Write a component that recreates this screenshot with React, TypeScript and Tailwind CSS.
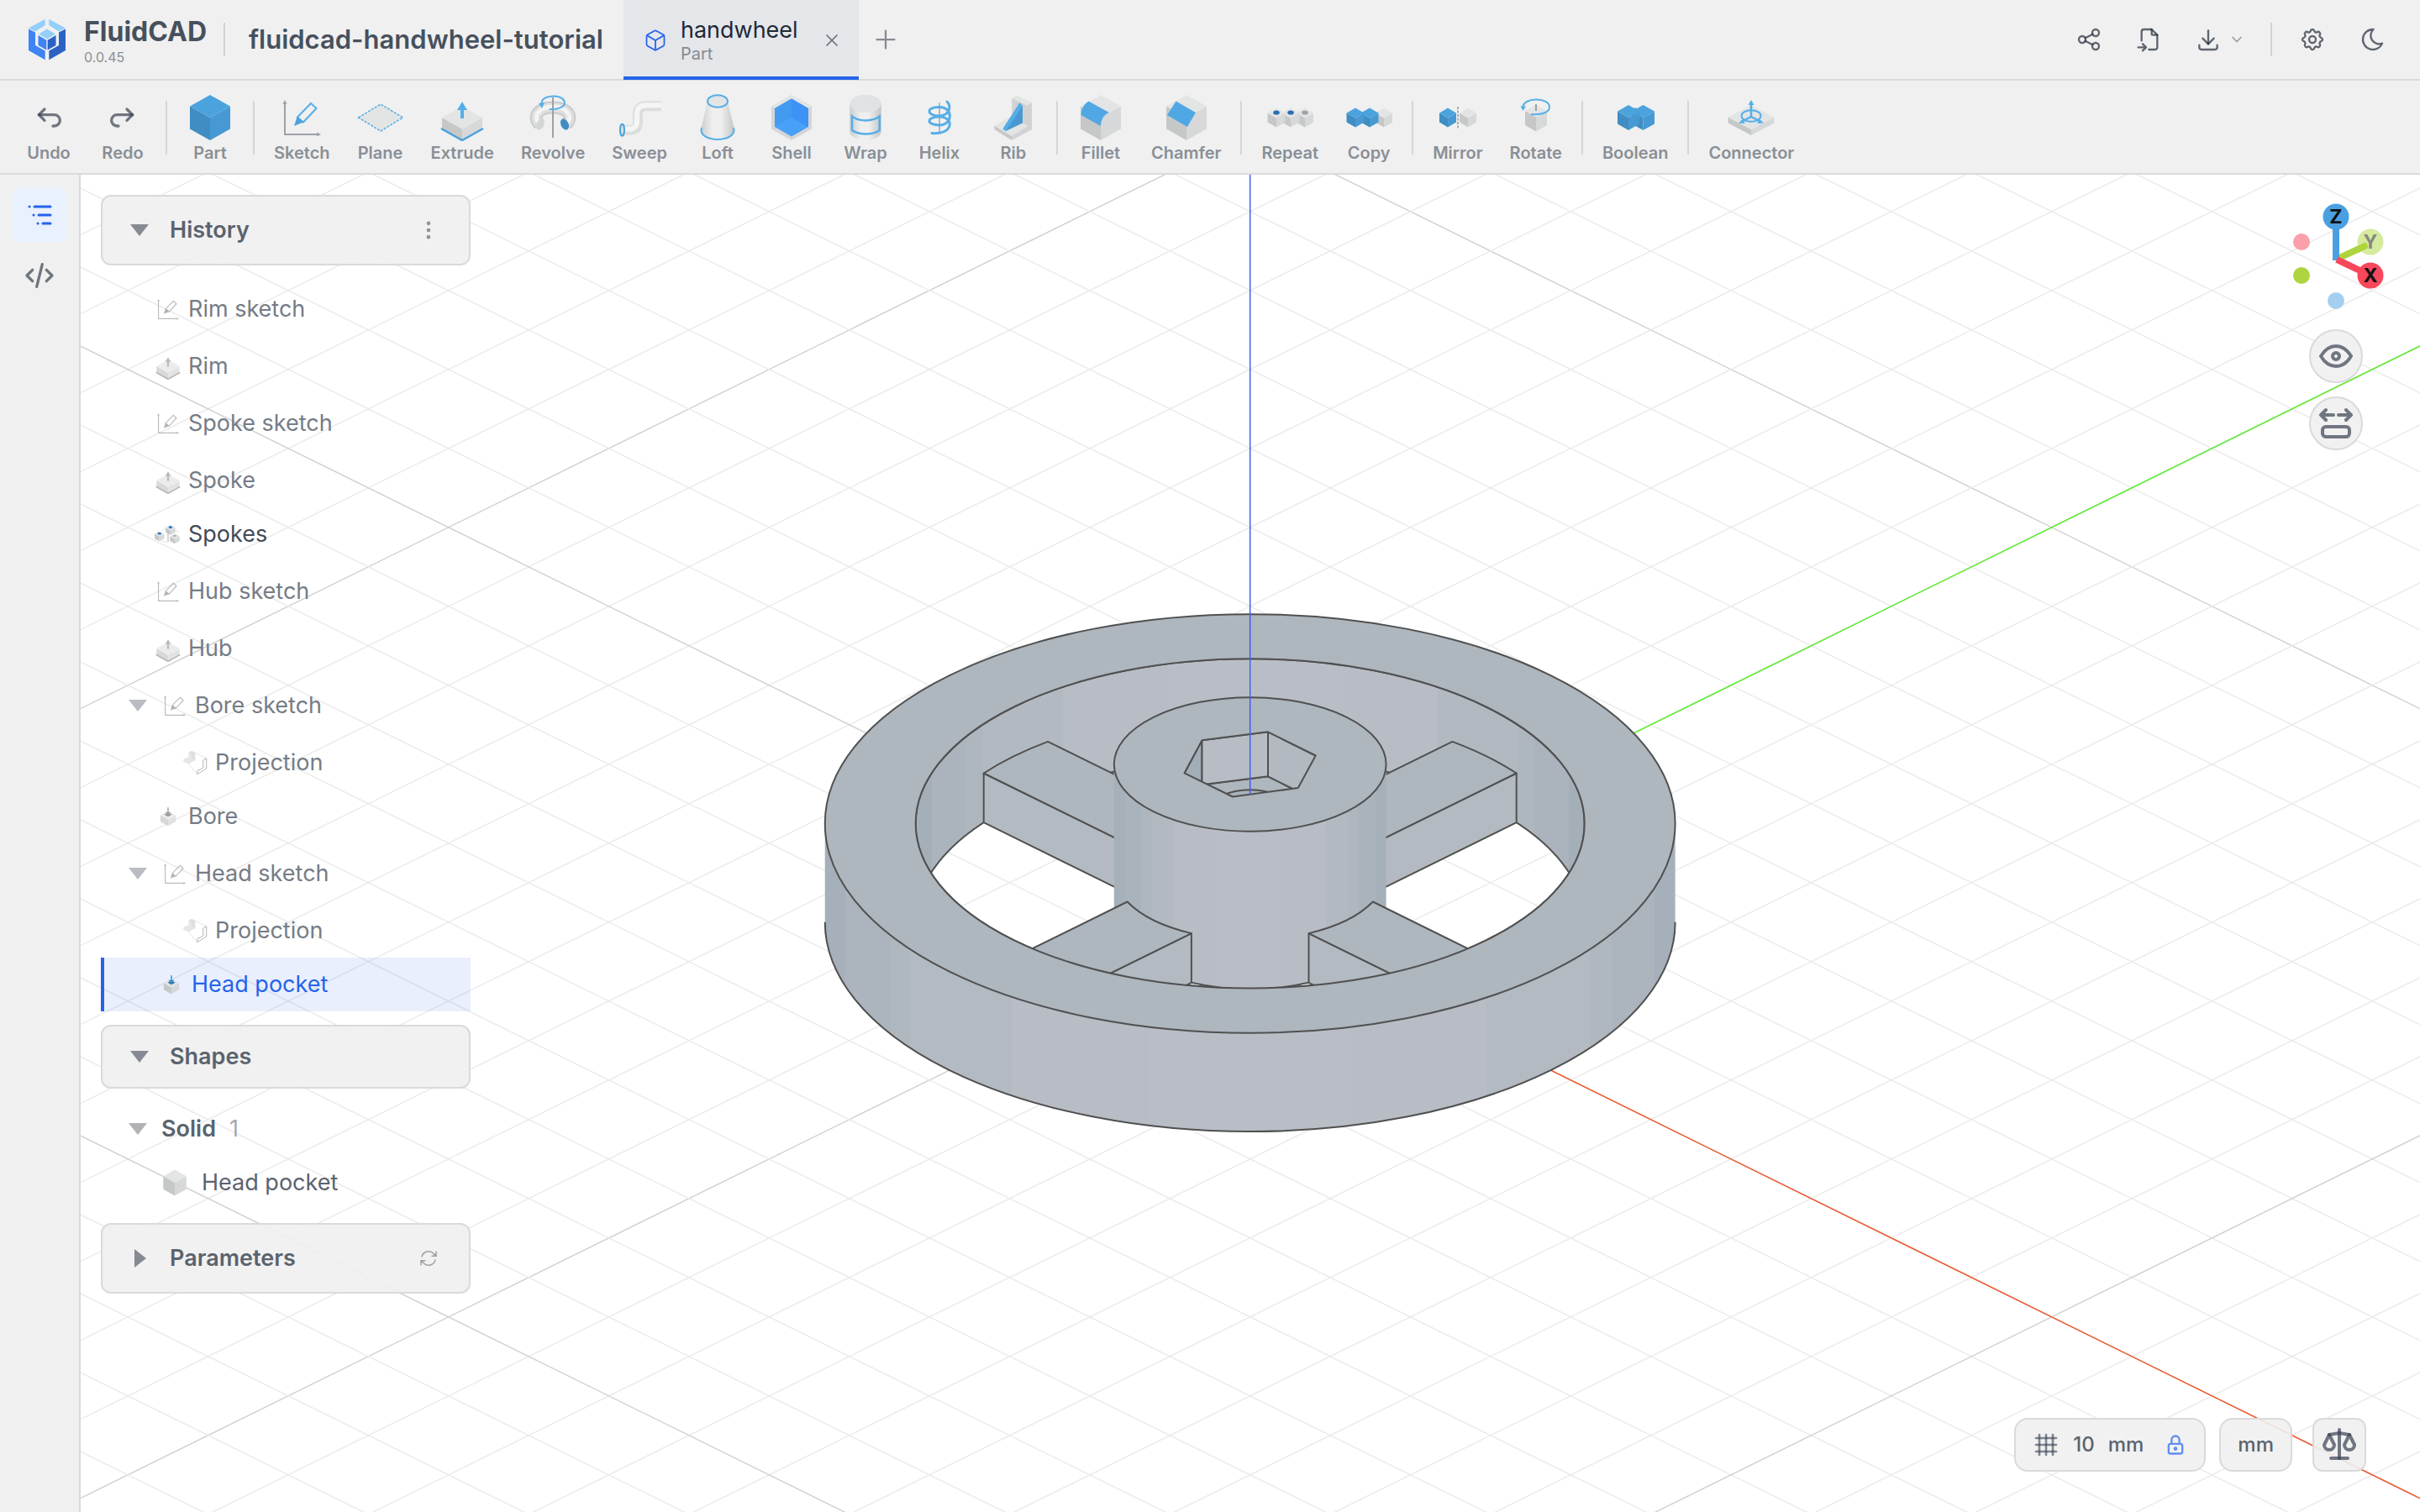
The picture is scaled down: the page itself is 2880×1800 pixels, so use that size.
import { useState, type ReactNode } from 'react';
import { HiOutlineArrowPath } from 'react-icons/hi2';
import {
  TbArrowBackUp,
  TbArrowForwardUp,
  TbChevronDown,
  TbCode,
  TbCube,
  TbDotsVertical,
  TbDownload,
  TbEye,
  TbFileImport,
  TbGrid4X4,
  TbLock,
  TbMoon,
  TbPlus,
  TbScale,
  TbSettings,
  TbShare,
  TbX,
} from 'react-icons/tb';

const BLUE = { top: '#4ba3dd', left: '#3f8dc2', right: '#4799d3' };
const GRAY = { top: '#e3e5e5', left: '#c6c8c8', right: '#d6d8d9' };
const LINE = '#56aee8';

interface BoxProps {
  x?: number;
  y?: number;
  w?: number;
  d?: number;
  h?: number;
  tone?: typeof BLUE;
}

// isometric box, (x, y) is the centre of its top face
function Box({ x = 28, y = 14.5, w = 24, d = 13.5, h = 27, tone = GRAY }: BoxProps) {
  return (
    <g>
      <path d={`M${x - w} ${y}L${x} ${y + d}V${y + d + h}L${x - w} ${y + h}Z`} fill={tone.left} />
      <path d={`M${x + w} ${y}L${x} ${y + d}V${y + d + h}L${x + w} ${y + h}Z`} fill={tone.right} />
      <path d={`M${x - w} ${y}L${x} ${y - d}L${x + w} ${y}L${x} ${y + d}Z`} fill={tone.top} />
    </g>
  );
}

const ICONS: Record<string, ReactNode> = {
  part: <Box tone={BLUE} />,
  sketch: (
    <g fill="none">
      <path d="M8 9V48H48" stroke="#9ca1a8" strokeWidth="2" />
      <path d="M5.500 12L8 7L10.500 12ZM46 45.500L51 48L46 50.500Z" fill="#9ca1a8" />
      <path d="M39 11L45.500 17L30 33.500L23 27.500Z" stroke={LINE} strokeWidth="2" />
      <path d="M22.500 27L30 33.500L19 38Z" fill="#4ba3dd" />
    </g>
  ),
  plane: (
    <path d="M1.500 28L28 12L54.500 28L28 44Z" fill="#e3e5e5" stroke={LINE} strokeWidth="1.500" strokeDasharray="3 1.500" />
  ),
  extrude: (
    <g>
      <Box y={28} h={13} />
      <path d="M3 41L28 55L53 41" fill="none" stroke="#4b9fdc" strokeWidth="2.500" />
      <path d="M28 29V17" stroke={LINE} strokeWidth="4" />
      <path d="M22 19L28 9L34 19Z" fill={LINE} />
    </g>
  ),
  revolve: (
    <g fill="none">
      <path d="M12 36C3 27 10 16 28 16S53 27 44 36" stroke="#c9cbcc" strokeWidth="15" />
      <path d="M12 36C3 27 10 16 28 16S53 27 44 36" stroke="#dddfdf" strokeWidth="11" />
      <path d="M11 34C4 27 11 15 28 15S52 27 45 34" stroke="#f4f4f4" strokeWidth="5" />
      <ellipse cx="13" cy="36" rx="4.500" ry="7" fill="#d3d5d6" transform="rotate(25 13 36)" />
      <ellipse cx="42" cy="36" rx="4.500" ry="7" fill="#3f8dc2" transform="rotate(-25 42 36)" />
      <path d="M28 4V52" stroke="#9ca1a8" strokeWidth="2" />
      <path d="M15 14C12 5 22 2.500 29 2.500C37 2.500 42 6 42 10.500C42 15 35 18.500 24 18" stroke={LINE} strokeWidth="2" />
      <path d="M11 11L18 10L15 17Z" fill={LINE} />
    </g>
  ),
  sweep: (
    <g fill="none">
      <path d="M8 42.700H17C24 42.700 26 39 26 33V25C26 17 29 14.300 36 14.300H54" stroke="#dcdede" strokeWidth="12" />
      <path d="M8 41.700H16C22 41.700 25 38 25 32V24C25 16 29 13.300 36 13.300H54" stroke="#f5f5f5" strokeWidth="6" />
      <ellipse cx="7.500" cy="42.700" rx="2.500" ry="7" fill="#dfe1e1" stroke="#4ba3dd" strokeWidth="2" />
    </g>
  ),
  loft: (
    <g>
      <path d="M16 9L8 42C8 50 17 54 28 54S48 50 48 42L40 9Z" fill="url(#barrel)" />
      <path d="M9 40C6 49 17 54 28 54S50 49 47 40" fill="none" stroke={LINE} strokeWidth="2" />
      <ellipse cx="28" cy="8.500" rx="12" ry="7.300" fill="#e3e5e5" stroke={LINE} strokeWidth="2" />
    </g>
  ),
  shell: (
    <g>
      <path d="M28 1L52 14.500V41.500L28 55L4 41.500V14.500Z" fill="#d3d5d6" />
      <path d="M28 1L52 14.500L48 17L28 5.500L8 17L4 14.500Z" fill="#e3e5e5" />
      <path d="M28 5.500L48 17V39L28 50.500L8 39V17Z" fill="#48a0f8" />
      <path d="M28 5.500V28L8 39V17Z" fill="#439bf0" />
      <path d="M28 5.500L48 17V39L28 28Z" fill="#3c93f5" />
    </g>
  ),
  wrap: (
    <g>
      <path d="M9.300 11V44C9.300 50 17 55 28 55S46.700 50 46.700 44V11Z" fill="url(#barrel)" />
      <ellipse cx="28" cy="11.300" rx="18.700" ry="10.500" fill="#e0e3e3" />
      <path d="M12 26.500C20 33 36 33 44.700 26.500V43C37 49 20 49 12 43Z" fill="none" stroke={LINE} strokeWidth="2.500" />
    </g>
  ),
  helix: (
    <g fill="none" stroke={LINE} strokeWidth="3" strokeLinecap="round">
      <path d="M28 11V45" stroke="#b3b6ba" strokeWidth="2" />
      <path d="M37 9C42 14 41 25 28 26C12 26 12 15 28 15.500C45 16 44 37 28 37C12 37 12 27 28 27C46 27 45 49 19 46.500" />
    </g>
  ),
  rib: (
    <g>
      <path d="M26.300 5L32 1.500L50 10V42L26 55L5.500 42V38L26.300 26Z" fill="#e3e5e5" />
      <path d="M26.300 5L45 14V38L26.300 27Z" fill="#d0d2d3" />
      <path d="M50 10V42L26 55V50L45 38.500V13Z" fill="#d0d2d3" />
      <path d="M5.500 38L26 50V55L5.500 42Z" fill="#c6c8c8" />
      <path d="M35.500 10.500L39 14V34.500L19 44L15.500 41.500Z" fill="#4799d3" />
      <path d="M35.500 10.500L15.500 41.500L19 44L39 14Z" fill="#56aee8" />
    </g>
  ),
  fillet: (
    <g>
      <Box />
      <path d="M13.500 8.500L38 22C31 25 28 31 28 38L4.500 25C5 17 8 12 13.500 8.500Z" fill="#4fa8e3" />
    </g>
  ),
  chamfer: (
    <g>
      <Box />
      <path d="M15.500 8.500L39 22L29 39L5 25Z" fill="#4fa8e3" />
    </g>
  ),
  repeat: (
    <g>
      {[46, 29, 12].map((x) => (
        <g key={x}>
          <Box x={x} y={22.500} w={10.500} d={6} h={11} />
          <ellipse cx={x} cy="22" rx="3.800" ry="2.600" fill={x === 46 ? '#a0a3a6' : '#2a6db3'} />
        </g>
      ))}
    </g>
  ),
  copy: (
    <g>
      <Box x={46} y={22.500} w={10.500} d={6} h={11} />
      <Box x={29} y={22.500} w={10.500} d={6} h={11} tone={BLUE} />
      <Box x={12} y={22.500} w={10.500} d={6} h={11} tone={BLUE} />
    </g>
  ),
  mirror: (
    <g>
      <Box x={16} y={22.500} w={10} d={6} h={11} tone={BLUE} />
      <Box x={40} y={22.500} w={10} d={6} h={11} />
      <path d="M28 15V41" stroke="#aaadb0" strokeWidth="2" strokeDasharray="3 1.500" />
    </g>
  ),
  rotate: (
    <g fill="none">
      <Box y={20} w={13} d={7.5} h={17} />
      <path d="M28 12V20" stroke="#9ca1a8" strokeWidth="2" />
      <path d="M12.500 16C12 10 20 6.500 28 6.500C37 6.500 44 10 44 15.500C44 22 34 25 22 24" stroke={LINE} strokeWidth="2" />
      <path d="M9.500 14.500L16 14.500L12.500 20Z" fill={LINE} />
    </g>
  ),
  boolean: (
    <g>
      <Box x={37.5} y={20.5} w={13.5} d={7.5} h={15} tone={BLUE} />
      <Box x={20} y={20.5} w={13} d={7.5} h={15} tone={BLUE} />
      <path d="M28.500 16L34 20.500L28.500 24.500L22 20.500Z" fill="#4ba3dd" />
    </g>
  ),
  connector: (
    <g fill="none" stroke={LINE} strokeWidth="2.500">
      <g stroke="none">
        <Box y={27.500} w={27.500} d={14.500} h={7} />
      </g>
      <ellipse cx="28" cy="26" rx="11.500" ry="6.800" strokeWidth="2" />
      <path d="M28 10V27L16 33M28 27L40 33" />
      <path d="M24.500 13L28 7L31.500 13ZM18.500 29.500L13 34.500L20.500 35ZM37.500 29.500L43 34.500L35.500 35Z" fill={LINE} stroke="none" />
    </g>
  ),
  cube: <Box />,
  pocket: (
    <g>
      <Box y={25} w={16} d={8.5} h={14} />
      <path d="M20 24L28 20L36 24L28 28.500Z" fill="#2a7ab0" />
      <path d="M28 9V20" stroke={LINE} strokeWidth="3.500" />
      <path d="M22 19H34L28 26Z" fill="#3f8dc2" />
    </g>
  ),
  spokes: (
    <g>
      <path d="M16 20L26 14M41 18L50 24M12 40L26 46" stroke="#b3b6ba" strokeWidth="1.500" strokeDasharray="2 2" />
      <path d="M28 20V44" stroke="#b3b6ba" strokeWidth="2" />
      <Box x={33} y={14} w={10} d={5.5} h={10} />
      <Box x={10} y={27} w={10} d={5.5} h={10} />
      <Box x={42} y={32} w={10} d={5.5} h={10} />
      <ellipse cx="33" cy="13.500" rx="4" ry="2.500" fill="#2f78c4" />
      <ellipse cx="10" cy="26.500" rx="4" ry="2.500" fill="#2f78c4" />
      <ellipse cx="42" cy="31.500" rx="4" ry="2" fill="#b3b6ba" />
    </g>
  ),
  projection: (
    <g fill="none">
      <path d="M14.500 7L21 3.500L28.500 7V23L15 31L4 26V20L14.500 16Z" fill="#dcdede" />
      <path d="M14.500 7L21 10.500V20L28.500 23V7L21 3.500Z" fill="#cfd1d1" />
      <path d="M28.500 7L52 19M15 31L33 52" stroke="#b6b9bc" />
      <path d="M52 19V40L33 52V45L45 38.500V23Z" stroke="#7d8187" strokeWidth="1.500" />
    </g>
  ),
};

function PartIcon({ name, className }: { name: string; className: string }) {
  return (
    <svg viewBox="0 0 56 56" className={className} aria-hidden="true">
      {ICONS[name]}
    </svg>
  );
}

function Logo() {
  return (
    <svg viewBox="0 0 48 50" className="h-[50px] w-12" aria-hidden="true">
      <path d="M21.700 .7V8L10 15.500L2 11.500Z" fill="#93cffd" />
      <path d="M26.300 .7V8L38 15.500L46 11.500Z" fill="#93cffd" />
      <path d="M2 12.500L10 16.500V32L21.700 38.500V49.300L2 38Z" fill="#3f83f6" />
      <path d="M46 12.500L38 16.500V32L26.300 38.500V49.300L46 38Z" fill="#2a63c4" />
      <path d="M24 12.500L34 18.500L24 24.500L14 18.500Z" fill="#93cffd" />
      <path d="M13.500 20L23.300 25.700V37.500L13.500 32Z" fill="#3f83f6" />
      <path d="M34.500 20L24.700 25.700V37.500L34.500 32Z" fill="#2a63c4" />
    </svg>
  );
}

/* ---------- viewport ---------- */

const MM = 9.54;
const SLOPE = 0.4927;
const UP = 11.74;

// world millimetres -> drawing units, origin in the middle of the view
const project = (x: number, y: number, z: number) =>
  `${((x + y) * MM).toFixed(1)} ${((x - y) * MM * SLOPE - z * UP).toFixed(1)}`;

const poly = (...pts: number[][]) => `M${pts.map(([x, y, z]) => project(x, y, z)).join('L')}Z`;

const ring = (r: number, z: number) => {
  const rx = r * MM * Math.SQRT2;
  const ry = rx * SLOPE;
  const cy = -z * UP;
  return `M${-rx} ${cy}A${rx} ${ry} 0 1 1 ${rx} ${cy}A${rx} ${ry} 0 1 1 ${-rx} ${cy}Z`;
};

// front half of a circle
const frontArc = (r: number, z: number) => {
  const rx = r * MM * Math.SQRT2;
  return `M${-rx} ${-z * UP}A${rx} ${rx * SLOPE} 0 0 0 ${rx} ${-z * UP}`;
};

// front half of a cylinder's wall
const wall = (r: number, z0: number, z1: number) => {
  const rx = r * MM * Math.SQRT2;
  const ry = rx * SLOPE;
  return `M${-rx} ${-z1 * UP}V${-z0 * UP}A${rx} ${ry} 0 0 0 ${rx} ${-z0 * UP}V${-z1 * UP}A${rx} ${ry} 0 0 1 ${-rx} ${-z1 * UP}Z`;
};

const TOP = '#aeb6be';
const SIDE = '#b3bac1';
const EDGE = '#505050';

const R_OUT = 37.5;
const R_IN = 29.5;
const R_HUB = 12;
const IN_X = Math.sqrt(R_IN ** 2 - 16);
const HUB_X = Math.sqrt(R_HUB ** 2 - 16);

const HEX = [
  [-57.2, -216.5],
  [21.3, -226.5],
  [78, -198.3],
  [57.1, -159.7],
  [-20.7, -149.3],
  [-78.1, -177.5],
];
const HEX_DEPTH = 53;
const hexPath = (dy: number) => `M${HEX.map(([x, y]) => `${x} ${y + dy}`).join('L')}Z`;

function hexFace(i: number) {
  const [ax, ay] = HEX[i];
  const [bx, by] = HEX[(i + 1) % 6];
  return `M${ax} ${ay}L${bx} ${by}V${by + HEX_DEPTH}L${ax} ${ay + HEX_DEPTH}Z`;
}

function Bands({ id, stops }: { id: string; stops: [number, string][] }) {
  return (
    <linearGradient id={id}>
      {stops.map(([at, color], i) => [
        <stop key={`${i}a`} offset={i === 0 ? 0 : stops[i - 1][0]} stopColor={color} />,
        <stop key={`${i}b`} offset={at} stopColor={color} />,
      ])}
    </linearGradient>
  );
}

function Grid() {
  const lines: ReactNode[] = [];
  for (let k = -34; k <= 34; k++) {
    const y = k * 94;
    const stroke = k % 10 === 0 ? '#d2d2d2' : '#ebebeb';
    lines.push(<path key={k} d={`M-2400 ${y - 2400 * SLOPE}L2400 ${y + 2400 * SLOPE}M-2400 ${y + 2400 * SLOPE}L2400 ${y - 2400 * SLOPE}`} stroke={stroke} />);
  }
  return <g strokeWidth="1.500">{lines}</g>;
}

function Handwheel() {
  const s = 4;
  return (
    <g strokeLinejoin="round">
      <path d={wall(R_OUT, 0, 10)} fill="url(#outer)" />
      <path d={frontArc(R_OUT, 0)} fill="none" stroke={EDGE} strokeWidth="2" />
      <path d={`${ring(R_OUT, 10)}${ring(R_IN, 10)}`} fillRule="evenodd" fill={TOP} />
      <g clipPath="url(#opening)" stroke={EDGE} strokeWidth="2">
        <path d={`${ring(R_IN, 10)}${ring(R_IN, 0)}`} fillRule="evenodd" fill="url(#inner)" />

        {/* rear spokes */}
        <path d={poly([-IN_X, -s, 5], [-IN_X, -s, 0], [-HUB_X, -s, 0], [-HUB_X, -s, 5])} fill={SIDE} />
        <path d={`M${project(-IN_X, s, 5)}A398 196 0 0 0 ${project(-IN_X, -s, 5)}L${project(-HUB_X, -s, 5)}L${project(-HUB_X, s, 5)}Z`} fill={TOP} />
        <path d={poly([s, IN_X, 5], [s, IN_X, 0], [s, HUB_X, 0], [s, HUB_X, 5])} fill={SIDE} />
        <path d={`M${project(-s, IN_X, 5)}A398 196 0 0 1 ${project(s, IN_X, 5)}L${project(s, HUB_X, 5)}L${project(-s, HUB_X, 5)}Z`} fill={TOP} />

        {/* hub */}
        <path d={wall(R_HUB, 0, 16)} fill="url(#hub)" stroke="none" />
        <path d={`M${project(4, -HUB_X, 0)}A162 79.800 0 0 0 ${project(HUB_X, -4, 0)}`} fill="none" />
        <path d={ring(R_HUB, 16)} fill={TOP} />
        <g clipPath="url(#socket)">
          <path d={hexPath(HEX_DEPTH)} fill={TOP} />
          <path d={ring(3.4, 11.5)} fill="#a9b1b9" />
          <path d={hexFace(5)} fill="#a3adb7" />
          <path d={hexFace(0)} fill="#b8bcc5" />
          <path d={hexFace(1)} fill="#b3b9c0" />
        </g>
        <path d={hexPath(0)} fill="none" />

        {/* front spokes */}
        <path d={poly([HUB_X, -s, 5], [HUB_X, -s, 0], [IN_X, -s, 0], [IN_X, -s, 5])} fill={SIDE} />
        <path d={`M${project(HUB_X, -s, 5)}A162 79.800 0 0 0 ${project(HUB_X, s, 5)}L${project(IN_X, s, 5)}L${project(IN_X, -s, 5)}Z`} fill={TOP} />
        <path d={poly([s, -HUB_X, 5], [s, -HUB_X, 0], [s, -IN_X, 0], [s, -IN_X, 5])} fill={SIDE} />
        <path d={`M${project(-s, -HUB_X, 5)}A162 79.800 0 0 0 ${project(s, -HUB_X, 5)}L${project(s, -IN_X, 5)}L${project(-s, -IN_X, 5)}Z`} fill={TOP} />
      </g>
      <path d={`${ring(R_OUT, 10)}${ring(R_IN, 10)}`} fill="none" stroke={EDGE} strokeWidth="2" />
    </g>
  );
}

function Viewport() {
  return (
    <svg
      viewBox="-1391.700 -889.800 2784 1592"
      preserveAspectRatio="xMidYMid slice"
      className="absolute inset-0 h-full w-full"
      role="img"
      aria-label="handwheel model"
    >
      <defs>
        <clipPath id="opening">
          <path d={ring(R_IN, 10)} />
        </clipPath>
        <clipPath id="socket">
          <path d={hexPath(0)} />
        </clipPath>
        <linearGradient id="barrel">
          <stop offset="0" stopColor="#cbcdce" />
          <stop offset=".35" stopColor="#efefef" />
          <stop offset=".6" stopColor="#efefef" />
          <stop offset="1" stopColor="#c3c5c6" />
        </linearGradient>
        <Bands
          id="outer"
          stops={[
            [0.024, '#a6b0ba'],
            [0.077, '#acb4bd'],
            [0.1, '#b0b8bf'],
            [0.22, '#b3bac1'],
            [0.38, '#b8bdc5'],
            [0.616, '#b9bec6'],
            [0.778, '#b8bdc5'],
            [0.9, '#b3bac1'],
            [0.925, '#b0b8bf'],
            [0.976, '#acb4bd'],
            [1, '#a6b0ba'],
          ]}
        />
        <Bands
          id="inner"
          stops={[
            [0.024, '#a5afb8'],
            [0.075, '#abb4bc'],
            [0.1, '#aeb6be'],
            [0.22, '#b3b9c0'],
            [0.38, '#b8bdc5'],
            [0.64, '#b9bec6'],
            [0.779, '#b8bdc5'],
            [0.9, '#b3b9c0'],
            [0.925, '#aeb6be'],
            [0.976, '#abb4bc'],
            [1, '#a5afb8'],
          ]}
        />
        <Bands
          id="hub"
          stops={[
            [0.04, '#a5b0b9'],
            [0.1, '#a9b3bc'],
            [0.14, '#aeb6be'],
            [0.22, '#b3b9c0'],
            [0.38, '#b8bdc5'],
            [0.62, '#b9bec6'],
            [0.78, '#b8bdc5'],
            [0.86, '#b3b9c0'],
            [0.9, '#aeb6be'],
            [0.96, '#a9b3bc'],
            [1, '#a5b0b9'],
          ]}
        />
      </defs>
      <Grid />
      <path d={`M0 0L2400 ${2400 * SLOPE}`} stroke="#f0562a" strokeWidth="1.500" />
      <path d={`M0 0L2400 ${-2400 * SLOPE}`} stroke="#5cee2e" strokeWidth="1.500" />
      <Handwheel />
      <path d="M0 -1400V-152" stroke="#4060f0" strokeWidth="1.500" />
    </svg>
  );
}

function AxisGizmo() {
  return (
    <svg viewBox="0 0 128 136" className="h-34 w-32" role="img" aria-label="View orientation">
      <g fontFamily="Inter, sans-serif" fontWeight="700" fontSize="23" textAnchor="middle">
        <circle cx="23" cy="48" r="10" fill="#fb9fab" />
        <circle cx="64" cy="118" r="10" fill="#a4cff0" />
        <path d="M66 68L98 53" stroke="#aed53f" strokeWidth="8" />
        <circle cx="105" cy="48" r="15.500" fill="#d6eaa0" />
        <path d="M90 57L98 53" stroke="#aed53f" strokeWidth="8" strokeLinecap="round" />
        <text x="105" y="56" fill="#86897f">Y</text>
        <path d="M64 70V18" stroke="#4a9fe2" strokeWidth="8" />
        <circle cx="64" cy="18" r="15.500" fill="#4a9fe2" />
        <text x="64" y="26" fill="#111">Z</text>
        <path d="M65 69L105 88" stroke="#f8465a" strokeWidth="8" />
        <circle cx="105" cy="88" r="15.500" fill="#f8465a" />
        <text x="105" y="96" fill="#111">X</text>
        <circle cx="23" cy="88" r="10" fill="#aed53f" />
      </g>
    </svg>
  );
}

/* ---------- chrome ---------- */

const TOOL_GROUPS: { label: string; icon: string }[][] = [
  [{ label: 'Part', icon: 'part' }],
  [
    { label: 'Sketch', icon: 'sketch' },
    { label: 'Plane', icon: 'plane' },
    { label: 'Extrude', icon: 'extrude' },
    { label: 'Revolve', icon: 'revolve' },
    { label: 'Sweep', icon: 'sweep' },
    { label: 'Loft', icon: 'loft' },
    { label: 'Shell', icon: 'shell' },
    { label: 'Wrap', icon: 'wrap' },
    { label: 'Helix', icon: 'helix' },
    { label: 'Rib', icon: 'rib' },
  ],
  [
    { label: 'Fillet', icon: 'fillet' },
    { label: 'Chamfer', icon: 'chamfer' },
  ],
  [
    { label: 'Repeat', icon: 'repeat' },
    { label: 'Copy', icon: 'copy' },
  ],
  [
    { label: 'Mirror', icon: 'mirror' },
    { label: 'Rotate', icon: 'rotate' },
  ],
  [{ label: 'Boolean', icon: 'boolean' }],
  [{ label: 'Connector', icon: 'connector' }],
];

function ToolButton({ label, children }: { label: string; children: ReactNode }) {
  return (
    <button className="flex min-w-20 flex-col items-center gap-[2px] px-3 text-xl leading-6 font-semibold text-[#8a8f97]">
      <span className="flex h-14 items-center">{children}</span>
      {label}
    </button>
  );
}

function Separator() {
  return <span className="mx-[3px] mt-2 h-16 w-[2px] bg-[#d6d6d6]" />;
}

function Toolbar() {
  return (
    <div className="flex h-28 shrink-0 items-start gap-2 border-b-2 border-[#dadada] bg-[#f0f0f0] px-[18px] pt-4">
      <ToolButton label="Undo">
        <TbArrowBackUp className="size-10 text-[#374151]/70" />
      </ToolButton>
      <ToolButton label="Redo">
        <TbArrowForwardUp className="size-10 text-[#374151]/70" />
      </ToolButton>
      {TOOL_GROUPS.map((group) => (
        <div key={group[0].label} className="flex gap-2">
          <Separator />
          {group.map(({ label, icon }) => (
            <ToolButton key={label} label={label}>
              <PartIcon name={icon} className="size-14" />
            </ToolButton>
          ))}
        </div>
      ))}
    </div>
  );
}

function Header() {
  return (
    <header className="flex h-24 shrink-0 items-center justify-between border-b-2 border-[#dadada] bg-[#f0f0f0] pr-6 pl-8">
      <div className="flex h-full items-center">
        <Logo />
        <div className="ml-5 flex flex-col pt-1.5">
          <span className="text-[32px] leading-8 font-bold text-[#47505d]">FluidCAD</span>
          <span className="mt-1 text-base leading-5 text-[#8a8f97]">0.0.45</span>
        </div>
        <span className="mr-7 ml-5 h-10 w-[2px] bg-[#d2d2d2]" />
        <h1 className="text-[31px] leading-10 font-semibold text-[#47505d]">fluidcad-handwheel-tutorial</h1>
        <div className="ml-6 flex h-24 w-[280px] items-center border-b-4 border-[#2563eb] bg-[#e4e6ea] pt-1.5 pr-4 pl-6">
          <TbCube className="size-7 text-[#2563eb]" strokeWidth={1.5} />
          <button className="ml-4 flex flex-1 flex-col text-left">
            <span className="text-[27px] leading-8 text-[#1f2937]">handwheel</span>
            <span className="text-xl leading-6 text-[#858a92]">Part</span>
          </button>
          <button aria-label="Close tab" className="flex size-8 items-center justify-center text-[#6b7280]">
            <TbX className="size-6" strokeWidth={1.75} />
          </button>
        </div>
        <button aria-label="New tab" className="flex size-16 items-center justify-center text-[#858a92]">
          <TbPlus className="size-9" strokeWidth={1.5} />
        </button>
      </div>
      <div className="flex items-center gap-2 text-[#1f2937]/70">
        <button aria-label="Share" className="flex size-16 items-center justify-center">
          <TbShare className="size-8" strokeWidth={1.75} />
        </button>
        <button aria-label="Import" className="flex size-16 items-center justify-center">
          <TbFileImport className="size-8" strokeWidth={1.75} />
        </button>
        <button aria-label="Export" className="flex h-16 items-center gap-2 px-3.5">
          <TbDownload className="size-8" strokeWidth={1.75} />
          <TbChevronDown className="size-5 opacity-60" />
        </button>
        <span className="mx-2 h-10 w-[2px] bg-[#d2d2d2]" />
        <button aria-label="Settings" className="flex size-16 items-center justify-center">
          <TbSettings className="size-8" strokeWidth={1.75} />
        </button>
        <button aria-label="Dark mode" className="flex size-16 items-center justify-center">
          <TbMoon className="size-8" strokeWidth={1.75} />
        </button>
      </div>
    </header>
  );
}

function Caret({ open = true, className = '' }: { open?: boolean; className?: string }) {
  return (
    <svg viewBox="0 0 24 24" className={`size-6 ${className}`} aria-hidden="true">
      <path d={open ? 'M1 5H23L12 19Z' : 'M6 1V23L20 12Z'} fill="currentColor" />
    </svg>
  );
}

function SectionHeader({ title, open, onToggle, action }: { title: string; open: boolean; onToggle: () => void; action?: ReactNode }) {
  return (
    <div className="flex items-center justify-between rounded-xl border-2 border-[#dadada] bg-[#efefef]/90 py-4 pr-6 pl-8">
      <button aria-expanded={open} onClick={onToggle} className="flex flex-1 items-center gap-6 text-[27px] leading-10 font-semibold text-[#5b636e]">
        <Caret open={open} className="text-[#868a92]" />
        {title}
      </button>
      {action}
    </div>
  );
}

interface Feature {
  name: string;
  icon: string;
  kind?: 'tall' | 'group' | 'child';
  state?: 'current' | 'selected';
}

const FEATURES: Feature[] = [
  { name: 'Rim sketch', icon: 'sketch', kind: 'tall' },
  { name: 'Rim', icon: 'extrude' },
  { name: 'Spoke sketch', icon: 'sketch', kind: 'tall' },
  { name: 'Spoke', icon: 'extrude' },
  { name: 'Spokes', icon: 'spokes', state: 'current' },
  { name: 'Hub sketch', icon: 'sketch', kind: 'tall' },
  { name: 'Hub', icon: 'extrude' },
  { name: 'Bore sketch', icon: 'sketch', kind: 'group' },
  { name: 'Projection', icon: 'projection', kind: 'child' },
  { name: 'Bore', icon: 'pocket' },
  { name: 'Head sketch', icon: 'sketch', kind: 'group' },
  { name: 'Projection', icon: 'projection', kind: 'child' },
  { name: 'Head pocket', icon: 'pocket', state: 'selected' },
];

function FeatureRow({ feature }: { feature: Feature }) {
  const { name, icon, kind, state } = feature;
  const height = kind === 'tall' || kind === 'group' ? 'h-18' : 'h-16';
  const indent = kind === 'group' ? 'pl-8' : kind === 'child' ? 'pl-24' : 'pl-16';
  const tone =
    state === 'selected'
      ? 'border-l-4 border-[#2563eb] bg-[#2563eb]/10 text-[#2563eb]'
      : state === 'current'
        ? 'text-[#414a57]'
        : 'text-[#757c86]';

  return (
    <li>
      <button className={`flex w-full items-center gap-2 text-[27px] leading-8 ${height} ${indent} ${tone}`}>
        {kind === 'group' && <Caret className="mr-2 text-[#b9bdc3]" />}
        <PartIcon name={icon} className={state ? 'size-8' : 'size-8 opacity-70 grayscale'} />
        {name}
      </button>
    </li>
  );
}

function SidePanels() {
  const [open, setOpen] = useState({ history: true, shapes: true, parameters: false });
  const toggle = (key: keyof typeof open) => setOpen((prev) => ({ ...prev, [key]: !prev[key] }));

  return (
    <div className="relative m-6 flex w-[440px] flex-col gap-4 self-start">
      <section>
        <SectionHeader
          title="History"
          open={open.history}
          onToggle={() => toggle('history')}
          action={
            <button aria-label="History options" className="flex size-12 items-center justify-center text-[#8f949b]">
              <TbDotsVertical className="size-7" />
            </button>
          }
        />
        {open.history && (
          <ul className="mt-4">
            {FEATURES.map((feature, i) => (
              <FeatureRow key={i} feature={feature} />
            ))}
          </ul>
        )}
      </section>
      <section>
        <SectionHeader title="Shapes" open={open.shapes} onToggle={() => toggle('shapes')} />
        {open.shapes && (
          <div className="mt-4 text-[27px] leading-8 text-[#5b636e]">
            <button className="flex h-16 w-full items-center gap-4 pl-8 font-semibold">
              <Caret className="text-[#b0b2b5]" />
              Solid
              <span className="font-normal text-[#a5a8ad]">1</span>
            </button>
            <button className="flex h-16 w-full items-center gap-4 pl-18">
              <PartIcon name="cube" className="size-8" />
              Head pocket
            </button>
          </div>
        )}
      </section>
      <section>
        <SectionHeader
          title="Parameters"
          open={open.parameters}
          onToggle={() => toggle('parameters')}
          action={
            <button aria-label="Refresh parameters" className="flex size-12 items-center justify-center text-[#9a9ea5]">
              <HiOutlineArrowPath className="size-6" />
            </button>
          }
        />
      </section>
    </div>
  );
}

function Rail() {
  return (
    <nav className="flex w-24 shrink-0 flex-col items-center gap-2 border-r-2 border-[#dadada] bg-[#f0f0f0] pt-4">
      <button aria-label="Model tree" className="flex size-16 items-center justify-center rounded-lg bg-[#e9f0fe] text-[#2563eb]">
        <svg viewBox="0 0 32 32" className="size-8" fill="none" stroke="currentColor" strokeWidth="3" strokeLinecap="round">
          <path d="M4 6H4.100M10 6H29M9 16H9.100M15 16H29M14 26H14.100M20 26H29" />
        </svg>
      </button>
      <button aria-label="Code" className="flex size-16 items-center justify-center text-[#6f757e]">
        <TbCode className="size-10" />
      </button>
    </nav>
  );
}

const FLOATING = 'flex items-center justify-center border-2 border-[#dadada] bg-[#efefef]/90';

export default function App() {
  return (
    <div className="flex h-screen flex-col overflow-hidden bg-white font-[Inter,'Liberation_Sans',sans-serif]">
      <Header />
      <Toolbar />
      <div className="flex min-h-0 flex-1">
        <Rail />
        <main className="relative flex min-w-0 flex-1">
          <Viewport />
          <SidePanels />

          <div className="absolute top-8 right-9 flex flex-col items-center gap-4">
            <AxisGizmo />
            <button aria-label="Visibility" className={`size-16 rounded-full text-[#374151]/70 ${FLOATING}`}>
              <TbEye className="size-12" />
            </button>
            <button aria-label="Measure" className={`size-16 rounded-full text-[#374151]/70 ${FLOATING}`}>
              <svg viewBox="0 0 48 48" className="size-12" fill="none" stroke="currentColor" strokeWidth="4" strokeLinecap="round" strokeLinejoin="round">
                <path d="M6 14H21M27 14H42M12 8L6 14L12 20M36 8L42 14L36 20" />
                <rect x="8" y="28" width="32" height="12" rx="4" />
              </svg>
            </button>
          </div>

          <div className="absolute right-16 bottom-12 flex text-2xl leading-8 font-medium text-[#5b636e]">
            <div className={`h-16 rounded-2xl px-5 ${FLOATING}`}>
              <TbGrid4X4 className="size-8 text-[#374151]/60" />
              <button className="ml-4">10</button>
              <span className="ml-4">mm</span>
              <button aria-label="Lock grid size" className="ml-6 text-[#5f8ff2]">
                <TbLock className="size-7" />
              </button>
            </div>
            <button className={`ml-4 h-16 rounded-2xl px-5 ${FLOATING}`}>mm</button>
            <button aria-label="Mass properties" className={`ml-6 size-16 rounded-xl text-[#374151]/70 ${FLOATING}`}>
              <TbScale className="size-12" />
            </button>
          </div>
        </main>
      </div>
    </div>
  );
}
